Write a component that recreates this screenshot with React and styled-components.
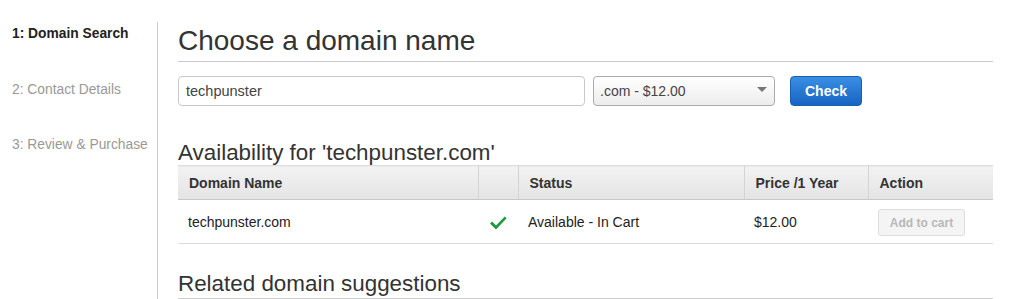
import React from "react";
import styled, { createGlobalStyle } from "styled-components";

const GlobalStyle = createGlobalStyle`
  body {
    margin: 0;
    background: #fff;
    font-family: "Liberation Sans", Arial, sans-serif;
    color: #333;
  }
`;

const Page = styled.div`
  display: flex;
  align-items: flex-start;
  height: 299px;
  overflow: hidden;
`;

const Sidebar = styled.nav`
  width: 158px;
  flex-shrink: 0;
  margin-top: 22px;
  height: 300px;
  border-right: 1px solid #ccc;
  box-sizing: border-box;
  display: flex;
  flex-direction: column;
  gap: 38px;
  padding: 3px 0 0 12px;
`;

const Step = styled.div`
  font-size: 13.8px;
  line-height: 17.5px;
  color: ${p => (p.active ? "#222" : "#999")};
  font-weight: ${p => (p.active ? "bold" : "normal")};
  white-space: nowrap;
`;

const Main = styled.main`
  flex: 1;
  padding: 22px 16px 0 20px;
`;

const Title = styled.h1`
  margin: 0;
  font-size: 28px;
  font-weight: normal;
  line-height: 37px;
  color: #333;
  padding-bottom: 2px;
  border-bottom: 1px solid #ccc;
`;

const SearchRow = styled.div`
  display: flex;
  align-items: center;
  margin-top: 14px;
  gap: 8px;
`;

const TextInput = styled.div`
  width: 407px;
  height: 30px;
  box-sizing: border-box;
  border: 1px solid #c8c8c8;
  border-radius: 4px;
  padding: 0 7px;
  display: flex;
  align-items: center;
  font-size: 14.5px;
  color: #444;
`;

const Select = styled.div`
  width: 182px;
  height: 30px;
  box-sizing: border-box;
  border: 1px solid #aaa;
  border-radius: 4px;
  background: linear-gradient(#fff, #ececec);
  display: flex;
  align-items: center;
  justify-content: space-between;
  padding: 0 7px 0 6px;
  font-size: 14px;
  color: #444;
`;

const Caret = styled.span`
  width: 0;
  height: 0;
  border-left: 5px solid transparent;
  border-right: 5px solid transparent;
  border-top: 5px solid #777;
  margin-top: -4px;
`;

const CheckButton = styled.button`
  margin-left: 7px;
  width: 72px;
  height: 30px;
  border: 1px solid #1a5fb0;
  border-radius: 4px;
  background: linear-gradient(#3a8fe4, #1763c2);
  color: #fff;
  font-family: inherit;
  font-weight: bold;
  font-size: 14px;
`;

const SubTitle = styled.h2`
  margin: ${p => p.top}px 0 0;
  font-size: 22.4px;
  font-weight: normal;
  line-height: 25px;
  color: #333;
`;

const Table = styled.table`
  width: 815px;
  border-collapse: collapse;
  font-size: 14px;
`;

const Th = styled.th`
  text-align: left;
  height: 34px;
  padding: 0 11px;
  box-sizing: border-box;
  font-weight: bold;
  font-size: 14px;
  color: #333;
  background: linear-gradient(#f2f2f2, #e4e4e4);
  border-top: 1px solid #ddd;
  border-bottom: 1px solid #c8c8c8;
  border-left: 1px solid #d4d4d4;
  &:first-child {
    border-left: none;
  }
`;

const Td = styled.td`
  height: 43px;
  padding: 0 ${p => (p.center ? 0 : 10)}px;
  text-align: ${p => (p.center ? "center" : "left")};
  color: #222;
  border-bottom: 1px solid #ddd;
  font-size: 14px;
`;

const CartButton = styled.button`
  width: 87px;
  height: 27px;
  border: 1px solid #ddd;
  border-radius: 3px;
  background: #f4f4f4;
  color: #b8b8b8;
  font-family: inherit;
  font-weight: bold;
  font-size: 12px;
  margin-top: 2px;
`;

const Related = styled.div`
  border-bottom: 1px solid #ccc;
  padding-bottom: 2px;
`;

function Tick() {
  return (
    <svg width="18" height="16" viewBox="0 0 18 16" style={{ verticalAlign: "middle", marginTop: 3 }}>
      <path d="M1 8.5 L3.2 6.6 L7 10.6 L15.8 1.5 L17.6 3.3 L7 14.5 Z" fill="#1f9a3c" />
    </svg>
  );
}

export default function App() {
  return (
    <>
      <GlobalStyle />
      <Page>
        <Sidebar>
          <Step active>1: Domain Search</Step>
          <Step>2: Contact Details</Step>
          <Step>3: Review &amp; Purchase</Step>
        </Sidebar>
        <Main>
          <Title>Choose a domain name</Title>
          <SearchRow>
            <TextInput>techpunster</TextInput>
            <Select>
              .com - $12.00
              <Caret />
            </Select>
            <CheckButton>Check</CheckButton>
          </SearchRow>
          <SubTitle top={34}>Availability for 'techpunster.com'</SubTitle>
          <Table>
            <thead>
              <tr>
                <Th style={{ width: 300 }}>Domain Name</Th>
                <Th style={{ width: 40 }}></Th>
                <Th style={{ width: 226 }}>Status</Th>
                <Th style={{ width: 124 }}>Price /1 Year</Th>
                <Th>Action</Th>
              </tr>
            </thead>
            <tbody>
              <tr>
                <Td>techpunster.com</Td>
                <Td center><Tick /></Td>
                <Td>Available - In Cart</Td>
                <Td>$12.00</Td>
                <Td><CartButton disabled>Add to cart</CartButton></Td>
              </tr>
            </tbody>
          </Table>
          <Related>
            <SubTitle top={27}>Related domain suggestions</SubTitle>
          </Related>
        </Main>
      </Page>
    </>
  );
}
